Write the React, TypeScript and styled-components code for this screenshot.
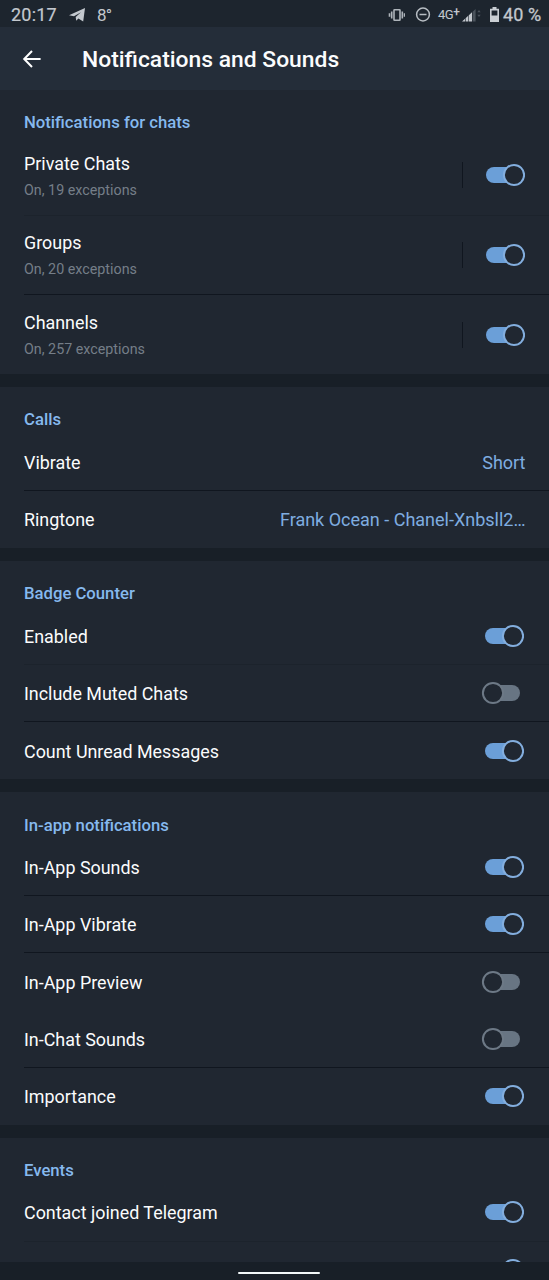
import React from "react";
import styled, { createGlobalStyle } from "styled-components";

const GlobalStyle = createGlobalStyle`
  * { box-sizing: border-box; }
  body { margin: 0; background: #181f27; overflow: hidden; }
`;

const Screen = styled.div`
  width: 549px;
  height: 1280px;
  display: flex;
  flex-direction: column;
  overflow: hidden;
  background: #181f27;
  color: #fbfcfd;
  font-family: Roboto, "Noto Sans", sans-serif;
`;

const StatusBar = styled.div`
  flex: none;
  height: 27px;
  padding: 2px 8px 0 11px;
  display: flex;
  align-items: center;
  background: #1d252e;
  color: #c3c8ce;
  font-size: 18px;
  line-height: 26px;
  white-space: nowrap;
`;

const Clock = styled.span`
  width: 58px;
  letter-spacing: 0.2px;
  -webkit-text-stroke: 0.2px currentColor;
`;

const Temperature = styled.span`
  margin-left: 11px;
  font-size: 17px;
  letter-spacing: -0.9px;
`;

const StatusIcons = styled.div`
  margin-left: auto;
  display: flex;
  align-items: center;
`;

const StatusIcon = styled.svg`
  display: block;
  flex: none;
`;

const Network = styled.span`
  width: 24px;
  margin-left: 7px;
  display: flex;
  align-items: center;
  font-size: 13px;
  letter-spacing: -0.5px;
`;

const Plus = styled.span`
  margin-top: -5px;
  font-size: 12px;
  font-weight: 500;
`;

const Battery = styled.span`
  margin-left: 4px;
  width: 38px;
  letter-spacing: 0.1px;
  -webkit-text-stroke: 0.3px currentColor;
`;

const Header = styled.header`
  flex: none;
  height: 63px;
  padding: 0 22px;
  display: flex;
  align-items: center;
  gap: 40px;
  background: #242d39;
`;

const Title = styled.h1`
  margin: 0;
  padding-top: 2px;
  font-size: 22.85px;
  line-height: 28px;
  font-weight: 500;
  white-space: nowrap;
`;

const Content = styled.main`
  flex: none;
  height: 1171.5px;
  display: flex;
  flex-direction: column;
  gap: 13px;
  overflow: hidden;
`;

const Section = styled.section`
  flex: none;
  background: #202731;
`;

const SectionTitle = styled.h2`
  margin: 0;
  height: 46.3px;
  padding: 21.3px 24px 0;
  color: #86b9ee;
  font-size: 16.7px;
  line-height: 24px;
  font-weight: 500;
`;

const Row = styled.div<{ $tall?: boolean; $line?: "strong" | "faint" | "none" }>`
  height: ${(p) => (p.$tall ? 79.3 : 57.3)}px;
  margin-left: 24px;
  padding-right: ${(p) => (p.$tall ? 24 : 25)}px;
  display: flex;
  align-items: center;
  justify-content: space-between;
  border-bottom: ${(p) => (p.$line === "none" ? 0 : 1)}px solid
    ${(p) => (p.$line === "faint" ? "#1c232c" : "#10161f")};
`;

const Labels = styled.div`
  flex: 1;
`;

const Label = styled.div<{ $raised?: boolean }>`
  padding-top: ${(p) => (p.$raised ? 1 : 2)}px;
  font-size: 17.9px;
  line-height: 24px;
  white-space: nowrap;
`;

const Detail = styled.div`
  margin-top: 4px;
  color: #757e88;
  font-size: 14.3px;
  line-height: 20px;
`;

const Value = styled.div`
  padding-top: 2px;
  margin-right: -1.5px;
  color: #7fade0;
  font-size: 18px;
  line-height: 24px;
  text-align: right;
  white-space: nowrap;
`;

const Separator = styled.div`
  width: 1px;
  height: 26px;
  margin-right: 22px;
  background: #10161f;
`;

const ToggleArt = styled.svg<{ $on: boolean }>`
  display: block;
  flex: none;
  margin-right: ${(p) => (p.$on ? 0 : 3)}px;
`;

const NavBar = styled.div`
  flex: 1;
  display: flex;
  justify-content: center;
  padding-top: 10.5px;
`;

const HomeHandle = styled.div`
  width: 82px;
  height: 2px;
  margin-left: 8px;
  border-radius: 1px;
  background: #f2f7f8;
`;

function Toggle({ on }: { on: boolean }) {
  return (
    <ToggleArt $on={on} width="40" height="24" viewBox="0 0 40 24">
      <rect x={on ? 1 : 8} y="4" width="31" height="16" rx="8" fill={on ? "#6b9fd8" : "#687583"} />
      <circle cx={on ? 29 : 12} cy="12" r="10.1" fill="#202731" stroke={on ? "#83aede" : "#6d7986"} strokeWidth="2" />
    </ToggleArt>
  );
}

type Line = "strong" | "faint" | "none";
type Item = { label: string; detail?: string; value?: string; on?: boolean; line?: Line };

const sections: { title: string; items: Item[] }[] = [
  {
    title: "Notifications for chats",
    items: [
      { label: "Private Chats", detail: "On, 19 exceptions", on: true, line: "faint" },
      { label: "Groups", detail: "On, 20 exceptions", on: true },
      { label: "Channels", detail: "On, 257 exceptions", on: true, line: "none" },
    ],
  },
  {
    title: "Calls",
    items: [
      { label: "Vibrate", value: "Short" },
      { label: "Ringtone", value: "Frank Ocean - Chanel-Xnbsll2…", line: "none" },
    ],
  },
  {
    title: "Badge Counter",
    items: [
      { label: "Enabled", on: true, line: "faint" },
      { label: "Include Muted Chats", on: false },
      { label: "Count Unread Messages", on: true, line: "none" },
    ],
  },
  {
    title: "In-app notifications",
    items: [
      { label: "In-App Sounds", on: true },
      { label: "In-App Vibrate", on: true },
      { label: "In-App Preview", on: false, line: "none" },
      { label: "In-Chat Sounds", on: false },
      { label: "Importance", on: true, line: "none" },
    ],
  },
  {
    title: "Events",
    items: [
      { label: "Contact joined Telegram", on: true, line: "faint" },
      { label: "", on: true, line: "none" },
    ],
  },
];

export default function App() {
  return (
    <>
      <GlobalStyle />
      <Screen>
        <StatusBar>
          <Clock>20:17</Clock>
          <StatusIcon width="17" height="14" viewBox="0 0 17 14">
            <path d="M0 7.2 16 0 14.2 13.4 9.4 10.4 7.2 12.8 6.7 8.9 12 4.2 5 8.3Z" fill="#c3c8ce" />
          </StatusIcon>
          <Temperature>8°</Temperature>
          <StatusIcons>
            <StatusIcon width="17" height="14" viewBox="-1 0 17 14" fill="none" stroke="#aeb4ba" strokeWidth="1.6">
              <rect x="5" y="1.8" width="6" height="10.4" rx="0.5" />
              <path d="M2.7 3.5v7M.5 5.2v3.6M13.3 3.5v7M15.5 5.2v3.6" />
            </StatusIcon>
            <StatusIcon width="26" height="16" viewBox="-10 0 26 16" fill="none" stroke="#b7bdc3" strokeWidth="1.5">
              <circle cx="8" cy="7.5" r="6.4" />
              <path d="M4.5 7.5h7" />
            </StatusIcon>
            <Network>4G<Plus>+</Plus></Network>
            <StatusIcon width="20" height="14" viewBox="0 0 20 14">
              <path d="M0 13.5 3 10.7v2.8ZM3.6 10.2l2.6-2.4v5.7H3.6ZM6.8 7.2 10 4.3v9.2H6.8Z" fill="#c3c8ce" />
              <path d="M10.6 3.7 13.6.9v12.6h-3Z" fill="#4b535c" />
              <path d="M15.3 4.3 17 2l1.7 2.3ZM15.3 6.7 17 9l1.7-2.3Z" fill="#4b535c" />
            </StatusIcon>
            <StatusIcon width="17" height="16" viewBox="-8 0 17 16">
              <path d="M2.5 0h4v1.8H9V15H0V1.8h2.5Zm-.9 3.5v5h5.8v-5Z" fill="#c9ced3" fillRule="evenodd" />
            </StatusIcon>
            <Battery>40 %</Battery>
          </StatusIcons>
        </StatusBar>
        <Header>
          <StatusIcon width="20" height="20" viewBox="0 0 20 20" fill="none" stroke="#fff" strokeWidth="2">
            <path d="M18.6 10H2.5M10 2 2.2 10l7.8 8" />
          </StatusIcon>
          <Title>Notifications and Sounds</Title>
        </Header>
        <Content>
          {sections.map((section) => (
            <Section key={section.title}>
              <SectionTitle>{section.title}</SectionTitle>
              {section.items.map((item) => (
                <Row key={item.label} $tall={!!item.detail} $line={item.line}>
                  <Labels>
                    <Label $raised={!!item.detail}>{item.label}</Label>
                    {item.detail && <Detail>{item.detail}</Detail>}
                  </Labels>
                  {item.detail && <Separator />}
                  {item.value ? <Value>{item.value}</Value> : <Toggle on={!!item.on} />}
                </Row>
              ))}
            </Section>
          ))}
        </Content>
        <NavBar>
          <HomeHandle />
        </NavBar>
      </Screen>
    </>
  );
}
